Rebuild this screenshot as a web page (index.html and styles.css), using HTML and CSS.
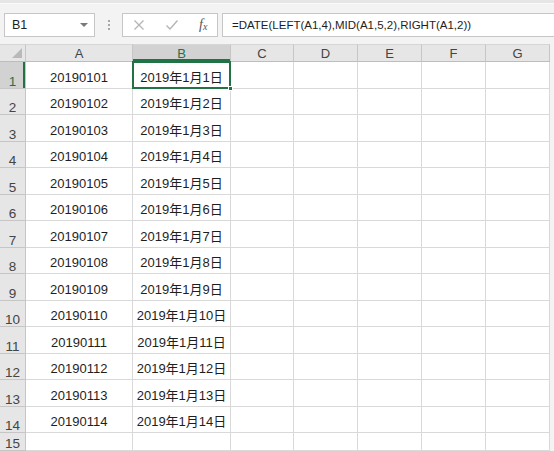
FILE: index.html
```html
<!DOCTYPE html>
<html>
<head>
<meta charset="utf-8">
<link rel="stylesheet" href="styles.css">
</head>
<body>
<div class="app">
  <div class="topline"></div>
  <div class="toolbar">
    <div class="namebox"><span class="nm">B1</span><span class="caret"></span></div>
    <div class="grip"><i></i><i></i><i></i></div>
    <div class="fbtns">
      <svg class="ic" width="12" height="12" viewBox="0 0 12 12"><path d="M1.5 1.5 L10.5 10.5 M10.5 1.5 L1.5 10.5" stroke="#b4b4b4" stroke-width="1.3" fill="none"/></svg>
      <svg class="ic" width="14" height="12" viewBox="0 0 14 12"><path d="M1.5 6.5 L5 10 L12.5 1.5" stroke="#b4b4b4" stroke-width="1.4" fill="none"/></svg>
      <span class="fx">f<sub>x</sub></span>
    </div>
    <div class="formula">=DATE(LEFT(A1,4),MID(A1,5,2),RIGHT(A1,2))</div>
  </div>
  <div class="sheet">
    <div class="corner"><span class="tri"></span></div>
    <div class="ch">A</div><div class="ch sel-h">B</div><div class="ch">C</div><div class="ch">D</div><div class="ch">E</div><div class="ch">F</div><div class="ch">G</div><div class="fill"></div>

    <div class="rh sel-r">1</div><div class="c na">20190101</div><div class="c nb">2019年1月1日</div><div class="c"></div><div class="c"></div><div class="c"></div><div class="c"></div><div class="c"></div><div class="fill"></div>
    <div class="rh">2</div><div class="c na">20190102</div><div class="c nb">2019年1月2日</div><div class="c"></div><div class="c"></div><div class="c"></div><div class="c"></div><div class="c"></div><div class="fill"></div>
    <div class="rh">3</div><div class="c na">20190103</div><div class="c nb">2019年1月3日</div><div class="c"></div><div class="c"></div><div class="c"></div><div class="c"></div><div class="c"></div><div class="fill"></div>
    <div class="rh">4</div><div class="c na">20190104</div><div class="c nb">2019年1月4日</div><div class="c"></div><div class="c"></div><div class="c"></div><div class="c"></div><div class="c"></div><div class="fill"></div>
    <div class="rh">5</div><div class="c na">20190105</div><div class="c nb">2019年1月5日</div><div class="c"></div><div class="c"></div><div class="c"></div><div class="c"></div><div class="c"></div><div class="fill"></div>
    <div class="rh">6</div><div class="c na">20190106</div><div class="c nb">2019年1月6日</div><div class="c"></div><div class="c"></div><div class="c"></div><div class="c"></div><div class="c"></div><div class="fill"></div>
    <div class="rh">7</div><div class="c na">20190107</div><div class="c nb">2019年1月7日</div><div class="c"></div><div class="c"></div><div class="c"></div><div class="c"></div><div class="c"></div><div class="fill"></div>
    <div class="rh">8</div><div class="c na">20190108</div><div class="c nb">2019年1月8日</div><div class="c"></div><div class="c"></div><div class="c"></div><div class="c"></div><div class="c"></div><div class="fill"></div>
    <div class="rh">9</div><div class="c na">20190109</div><div class="c nb">2019年1月9日</div><div class="c"></div><div class="c"></div><div class="c"></div><div class="c"></div><div class="c"></div><div class="fill"></div>
    <div class="rh">10</div><div class="c na">20190110</div><div class="c nb">2019年1月10日</div><div class="c"></div><div class="c"></div><div class="c"></div><div class="c"></div><div class="c"></div><div class="fill"></div>
    <div class="rh">11</div><div class="c na">20190111</div><div class="c nb">2019年1月11日</div><div class="c"></div><div class="c"></div><div class="c"></div><div class="c"></div><div class="c"></div><div class="fill"></div>
    <div class="rh">12</div><div class="c na">20190112</div><div class="c nb">2019年1月12日</div><div class="c"></div><div class="c"></div><div class="c"></div><div class="c"></div><div class="c"></div><div class="fill"></div>
    <div class="rh">13</div><div class="c na">20190113</div><div class="c nb">2019年1月13日</div><div class="c"></div><div class="c"></div><div class="c"></div><div class="c"></div><div class="c"></div><div class="fill"></div>
    <div class="rh">14</div><div class="c na">20190114</div><div class="c nb">2019年1月14日</div><div class="c"></div><div class="c"></div><div class="c"></div><div class="c"></div><div class="c"></div><div class="fill"></div>
    <div class="rh">15</div><div class="c"></div><div class="c"></div><div class="c"></div><div class="c"></div><div class="c"></div><div class="c"></div><div class="c"></div><div class="fill"></div>

    <div class="selection"></div>
    <div class="handle"></div>
  </div>
</div>
</body>
</html>
```

FILE: styles.css
```css
html, body {
  margin: 0;
  padding: 0;
  background: #f3f3f3;
}

.app {
  width: 554px;
  height: 451px;
  overflow: hidden;
  background: #f3f3f3;
  font-family: "Liberation Sans", "Noto Sans CJK SC", sans-serif;
  color: #1e1e1e;
}

.topline {
  height: 3px;
  background: #e6e6e6;
  border-bottom: 1px solid #fbfbfb;
}

.toolbar {
  height: 40px;
  box-sizing: border-box;
  padding-top: 9px;
  display: flex;
  align-items: flex-start;
}

.namebox {
  margin-left: 4px;
  width: 91px;
  height: 24px;
  box-sizing: border-box;
  border: 1px solid #c6c6c6;
  background: #fff;
  display: flex;
  align-items: center;
  justify-content: space-between;
  padding: 0 6px 0 7px;
}

.nm {
  font-size: 12.5px;
  color: #1e1e1e;
}

.caret {
  width: 0;
  height: 0;
  border-left: 4px solid transparent;
  border-right: 4px solid transparent;
  border-top: 4px solid #7a7a7a;
}

.grip {
  width: 27px;
  height: 24px;
  display: flex;
  flex-direction: column;
  align-items: center;
  justify-content: center;
  gap: 2px;
}

.grip i {
  display: block;
  width: 2px;
  height: 2px;
  background: #a8a8a8;
}

.fbtns {
  width: 96px;
  height: 24px;
  box-sizing: border-box;
  border: 1px solid #c6c6c6;
  background: #fff;
  display: flex;
  align-items: center;
  padding-left: 10px;
  gap: 20px;
}

.fx {
  font-family: "Liberation Serif", serif;
  font-style: italic;
  font-size: 14px;
  color: #555;
  line-height: 1;
}

.fx sub {
  font-size: 10px;
  vertical-align: baseline;
  position: relative;
  top: 1px;
}

.formula {
  flex: 1;
  margin-left: 4px;
  height: 24px;
  box-sizing: border-box;
  border: 1px solid #c6c6c6;
  border-right: none;
  background: #fff;
  padding-left: 9px;
  display: flex;
  align-items: center;
  font-size: 11.5px;
  color: #1e1e1e;
  white-space: nowrap;
}

.sheet {
  position: relative;
  display: grid;
  grid-template-columns: 26px 107px 98px 63px 64px 64px 64px 64px 4px;
  grid-template-rows: 18px 27px 26px 27px 26px 27px 26px 27px 26px 27px 26px 27px 26px 27px 26px 18px;
}

.sheet > div {
  box-sizing: border-box;
}

.corner {
  background: #e6e6e6;
  border-right: 1px solid #c6c6c6;
  border-bottom: 1px solid #bdbdbd;
  border-top: 1px solid #d6d6d6;
  position: relative;
}

.tri {
  position: absolute;
  right: 3px;
  bottom: 3px;
  width: 0;
  height: 0;
  border-left: 10px solid transparent;
  border-bottom: 10px solid #b9b9b9;
}

.ch {
  background: #e6e6e6;
  border-right: 1px solid #c6c6c6;
  border-bottom: 1px solid #bdbdbd;
  border-top: 1px solid #d6d6d6;
  display: flex;
  align-items: center;
  justify-content: center;
  font-size: 13px;
  color: #444;
  padding-top: 1px;
}

.ch.sel-h {
  background: #d2d2d2;
  color: #217346;
  box-shadow: inset 0 -2px 0 #217346;
}

.rh {
  background: #e6e6e6;
  border-right: 1px solid #c6c6c6;
  border-bottom: 1px solid #c6c6c6;
  display: flex;
  align-items: flex-end;
  justify-content: center;
  font-size: 13.5px;
  line-height: 12px;
  color: #444;
}

.rh.sel-r {
  background: #d2d2d2;
  color: #217346;
  box-shadow: inset -2px 0 0 #217346;
}

.c {
  background: #fff;
  border-right: 1px solid #d9d9d9;
  border-bottom: 1px solid #d9d9d9;
  display: flex;
  align-items: flex-end;
  justify-content: center;
  line-height: 16px;
  padding-bottom: 2px;
  color: #1e1e1e;
  white-space: nowrap;
}

.na {
  font-size: 13px;
}

.nb {
  font-size: 13px;
}

.fill {
  background: #f3f3f3;
}

.selection {
  position: absolute;
  left: 132px;
  top: 17px;
  width: 99px;
  height: 28px;
  box-sizing: border-box;
  border: 2px solid #217346;
  pointer-events: none;
}

.handle {
  position: absolute;
  left: 228px;
  top: 42px;
  width: 5px;
  height: 5px;
  background: #217346;
  border: 1px solid #fff;
}
```
